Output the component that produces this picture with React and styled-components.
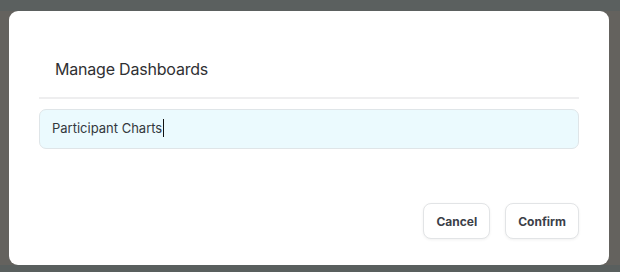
import React from "react";
import styled, { createGlobalStyle } from "styled-components";

const GlobalStyle = createGlobalStyle`
  html, body {
    margin: 0;
    padding: 0;
    height: 100%;
  }
  body {
    font-family: "Inter", "Noto Sans", sans-serif;
  }
  #root {
    height: 100%;
  }
`;

const App = () => {
  return (
    <>
      <GlobalStyle />
      <Backdrop>
        <Modal>
          <Title>Manage Dashboards</Title>
          <Divider />
          <NameField>
            <span>Participant Charts</span>
            <Caret />
          </NameField>
          <Footer>
            <Button>Cancel</Button>
            <Button>Confirm</Button>
          </Footer>
        </Modal>
      </Backdrop>
    </>
  );
};

//Styled Components
const Backdrop = styled.div`
  box-sizing: border-box;
  height: 272px;
  width: 620px;
  padding: 11px 11px 7px 9px;
  background: linear-gradient(
      to bottom,
      #5b605f 0 11px,
      transparent 11px calc(100% - 7px),
      #595f5e calc(100% - 7px)
    ),
    #64625e;
`;

const Modal = styled.div`
  box-sizing: border-box;
  height: 100%;
  background: #ffffff;
  border-radius: 9px;
  padding: 0 30px 26px;
  display: flex;
  flex-direction: column;
`;

const Title = styled.h2`
  margin: 0;
  padding: 48px 16px 0;
  height: 86px;
  box-sizing: border-box;
  font-size: 16px;
  font-weight: 400;
  color: #2f3033;
  letter-spacing: -0.2px;
`;

const Divider = styled.div`
  height: 2px;
  background: #eeeeef;
`;

const NameField = styled.div`
  margin-top: 10px;
  height: 40px;
  box-sizing: border-box;
  border: 1px solid #dfe5e8;
  border-radius: 7px;
  background: #ebfafe;
  display: flex;
  align-items: center;
  padding: 0 12px 3px;
  font-size: 13px;
  color: #33383d;
`;

const Caret = styled.span`
  display: inline-block;
  width: 1px;
  height: 18px;
  background: #111;
  margin-left: 1px;
`;

const Footer = styled.div`
  margin-top: auto;
  display: flex;
  justify-content: flex-end;
  gap: 15px;
`;

const Button = styled.button`
  height: 36px;
  padding: 0 12px;
  background: #ffffff;
  border: 1px solid #e2e4e6;
  border-radius: 8px;
  box-shadow: 0 1px 3px rgba(0, 0, 0, 0.06);
  font-family: "Inter", "Noto Sans", sans-serif;
  font-size: 12px;
  font-weight: 700;
  color: #3b4048;
  cursor: pointer;
`;

export default App;
